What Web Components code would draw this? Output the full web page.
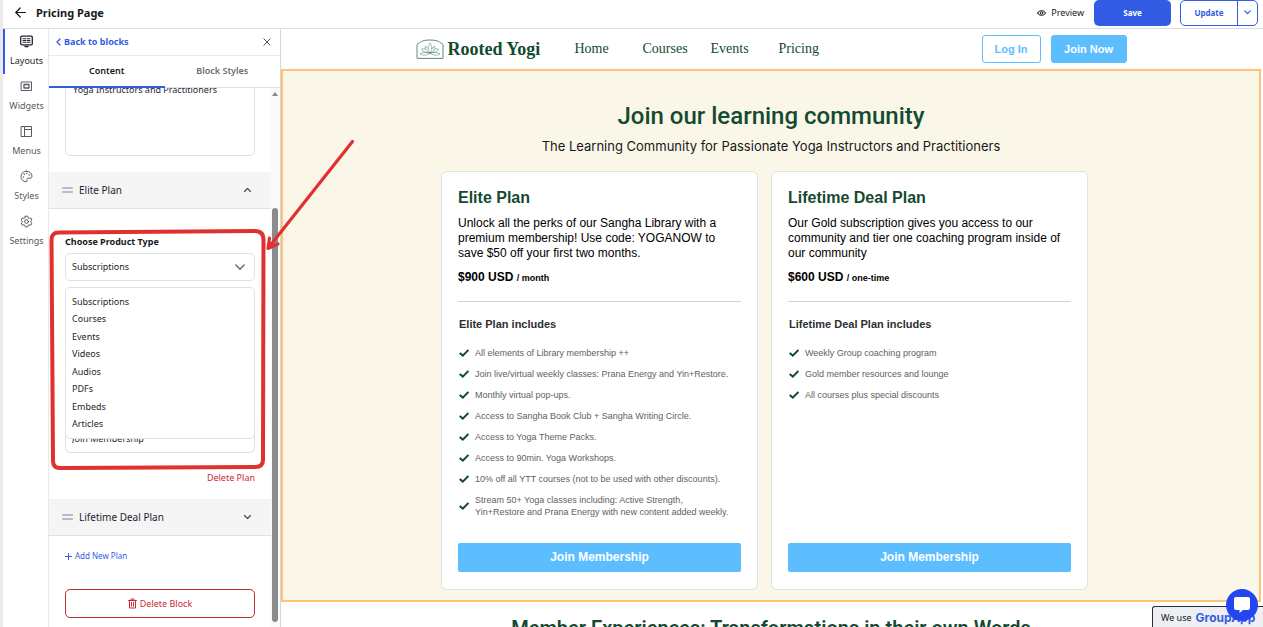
<!DOCTYPE html>
<html lang="en">
<head>
<meta charset="utf-8">
<meta name="viewport" content="width=device-width, initial-scale=1">
<title>Pricing Page</title>
<style>
  html, body { margin: 0; height: 100%; }
  body {
    overflow: hidden; background: #fff; color: #1f2430;
    font: 9px/14px "Noto Sans", "Open Sans", sans-serif;
    --blue: #335ce5; --red: #c92a35; --line: #dcdee3; --green: #144a30; --sky: #5cbeff;
  }
</style>
</head>
<body>
<app-shell>
  <top-bar slot="top" heading="Pricing Page"></top-bar>
  <nav-rail slot="rail">
    <rail-item icon="layouts" active>Layouts</rail-item>
    <rail-item icon="widgets">Widgets</rail-item>
    <rail-item icon="menus">Menus</rail-item>
    <rail-item icon="styles">Styles</rail-item>
    <rail-item icon="settings">Settings</rail-item>
  </nav-rail>
  <block-panel slot="panel"></block-panel>
  <site-preview>
    <site-nav slot="nav"></site-nav>
    <pricing-section>
      <span slot="title">Join our learning community</span>
      <span slot="subtitle">The Learning Community for Passionate Yoga Instructors and Practitioners</span>
      <plan-card name="Elite Plan" price="$900 USD" period="month">
        Unlock all the perks of our Sangha Library with a premium membership! Use code: YOGANOW to save $50 off your first two months.
        <plan-perk slot="perks">All elements of Library membership ++</plan-perk>
        <plan-perk slot="perks">Join live/virtual weekly classes: Prana Energy and Yin+Restore.</plan-perk>
        <plan-perk slot="perks">Monthly virtual pop-ups.</plan-perk>
        <plan-perk slot="perks">Access to Sangha Book Club + Sangha Writing Circle.</plan-perk>
        <plan-perk slot="perks">Access to Yoga Theme Packs.</plan-perk>
        <plan-perk slot="perks">Access to 90min. Yoga Workshops.</plan-perk>
        <plan-perk slot="perks">10% off all YTT courses (not to be used with other discounts).</plan-perk>
        <plan-perk slot="perks">Stream 50+ Yoga classes including: Active Strength,<br>Yin+Restore and Prana Energy with new content added weekly.</plan-perk>
      </plan-card>
      <plan-card name="Lifetime Deal Plan" price="$600 USD" period="one-time">
        Our Gold subscription gives you access to our community and tier one coaching program inside of our community
        <plan-perk slot="perks">Weekly Group coaching program</plan-perk>
        <plan-perk slot="perks">Gold member resources and lounge</plan-perk>
        <plan-perk slot="perks">All courses plus special discounts</plan-perk>
      </plan-card>
    </pricing-section>
    <span slot="next">Member Experiences: Transformations in their own Words</span>
  </site-preview>
  <callout-mark slot="over"></callout-mark>
  <chat-corner slot="over"></chat-corner>
</app-shell>

<script>
const base = `<style>
  :host, *, *::before, *::after { box-sizing: border-box; }
  :host { fill: none; stroke: currentColor; stroke-linecap: round; stroke-linejoin: round; }
  svg { display: block; flex: none; }
  button, input, select, textarea { font: inherit; color: inherit; margin: 0; }
  button { cursor: pointer; background: none; border: 0; padding: 0; }
  a { color: inherit; text-decoration: none; }
  h1, h2, h3, p { margin: 0; font: inherit; }
</style>`;

function define(name, render) {
  customElements.define(name, class extends HTMLElement {
    connectedCallback() {
      if (this.shadowRoot) return;
      const t = document.createElement('template');
      t.innerHTML = base + render(this);
      this.attachShadow({ mode: 'open' }).append(t.content.cloneNode(true));
    }
  });
}

define('app-shell', () => `<style>
  :host { display: grid; grid-template: auto minmax(0, 1fr) / 46px 232px minmax(0, 1fr); height: 100vh;
    position: relative; overflow: hidden; border-left: 3px solid #e9eaed; }
  ::slotted([slot=top]) { grid-column: 1 / -1; }
</style>
<slot name="top"></slot><slot name="rail"></slot><slot name="panel"></slot><slot></slot><slot name="over"></slot>`);

define('top-bar', el => `<style>
  :host { display: flex; align-items: center; height: 29px; padding: 0 5px 3px 12px; border-bottom: 1px solid var(--line); background: #fff; }
  h1 { font-size: 11px; line-height: 16px; font-weight: 700; margin: 0 auto 0 10px; color: #15181e; }
  .preview { display: flex; align-items: center; gap: 5px; margin-right: 10px; font-size: 9px; color: #15181e; }
  .save, .split { height: 26px; border-radius: 5px; font-size: 8px; font-weight: 700; }
  .save { width: 77px; background: var(--blue); color: #fff; margin-right: 9px; }
  .split { display: flex; width: 78px; border: 1px solid var(--blue); color: var(--blue); }
  .split button { flex: 1; }
  .split .more { flex: 0 0 20px; display: grid; place-items: center; border-left: 1px solid var(--blue); }
</style>
<button aria-label="Back"><svg width="11" height="11" viewBox="0 0 11 11" stroke="#15181e" stroke-width="1.2"><path d="M10.5 5.5H.8M5.2 1L.8 5.5L5.2 10"/></svg></button>
<h1>${el.getAttribute('heading')}</h1>
<button class="preview"><svg width="9" height="8" viewBox="0 0 9 8" stroke-width="1"><path d="M.5 4C2 .8 7 .8 8.5 4C7 7.200 2 7.200 .5 4Z"/><circle cx="4.5" cy="4" r="1.300"/></svg>Preview</button>
<button class="save">Save</button>
<div class="split"><button>Update</button><button class="more" aria-label="More update options"><svg width="7" height="5" viewBox="0 0 7 5" stroke-width="1.200"><path d="M.8.8L3.500 3.700L6.200.8"/></svg></button></div>`);

define('nav-rail', () => `<style>
  :host { display: flex; flex-direction: column; border-right: 1px solid #e8e9ed; background: #fff; }
</style><slot></slot>`);

const railIcons = {
  layouts: '<rect x=".7" y="1.200" width="11.600" height="8.600" rx="1" stroke-width="1.300"/><path d="M3 3.800h2.800M3 5.500h2.800M3 7.200h2.800M7.200 3.800H10M7.200 5.500H10M7.200 7.200H10" stroke-width="1.100"/><path d="M5 11.400h3" stroke-width="1.500"/>',
  widgets: '<rect x="1.500" y="2" width="10" height="8.500" stroke-width="1"/><rect x="4" y="4.500" width="5" height="3.500" stroke-width="1.300"/>',
  menus: '<path d="M1.500 1.500h10v10h-10zM4.500 1.500v10M4.500 4.500h7" stroke-width="1"/>',
  styles: '<path d="M6.500 1.200C3.300 1.200 1 3.500 1 6.500s2.500 5.300 5 5.300c1.300 0 1.100-1.200.9-2c-.2-1 .4-1.600 1.300-1.600h1.900c1.300 0 1.900-.8 1.900-2C12 3.300 9.500 1.200 6.500 1.200z" stroke-width="1"/><path d="M3.500 7v.1M4.300 4.300v.1M6.800 3.400v.1M9.300 4.900v.1" stroke-width="1.400"/>',
  settings: '<path d="M5.300 1.200h2.400l.4 1.600l1 .6l1.600-.5l1.200 2.100l-1.200 1.100v1l1.200 1.100l-1.200 2.100l-1.600-.5l-1 .6l-.4 1.500H5.300l-.4-1.500l-1-.6l-1.600.5l-1.200-2.100l1.200-1.100v-1L1.100 5l1.200-2.100l1.600.5l1-.6z" stroke-width="1"/><circle cx="6.500" cy="6.500" r="1.900" stroke-width="1"/>'
};
define('rail-item', el => `<style>
  :host { display: block; height: 45px; border-left: 2px solid transparent; color: #565a63; }
  :host([active]) { border-color: var(--blue); color: #22252c; }
  a { display: flex; flex-direction: column; align-items: center; gap: 6px; padding-top: 6px; }
</style>
<a href="#"><svg width="13" height="13" viewBox="0 0 13 13">${railIcons[el.getAttribute('icon')]}</svg><slot></slot></a>`);

define('plan-row', el => `<style>
  :host { display: flex; align-items: center; height: 37px; padding: 0 19px 0 13px; background: #f5f5f6; border-bottom: 1px solid #e0e1e6; font-size: 10px; }
  .name { flex: 1; padding-left: 6px; }
</style>
<svg width="11" height="6" viewBox="0 0 11 6" stroke="#7c8094"><path d="M.5 1h10M.5 5h10"/></svg>
<span class="name"><slot></slot></span>
<button aria-label="Toggle plan"><svg width="9" height="6" viewBox="0 0 9 6" stroke="#444" stroke-width="1.100"><path d="${el.hasAttribute('open') ? 'M1.500 4.500L4.500 1.500L7.500 4.500' : 'M1.500 1.500L4.500 4.500L7.500 1.500'}"/></svg></button>`);

define('product-select', () => `<style>
  :host { display: block; margin: 26px 16px 0; }
  label { display: block; font-weight: 700; color: #15181e; margin-bottom: 4px; }
  .field { position: relative; }
  select { appearance: none; width: 100%; height: 28px; padding: 0 6px; border: 1px solid #dedfe8; border-radius: 5px; background: #fff; display: block; }
  .field > svg { position: absolute; right: 10px; top: 11px; pointer-events: none; }
  ul { position: absolute; z-index: 1; top: 34px; left: 0; right: 0; height: 152px; margin: 0; padding: 7px 6px; list-style: none;
    display: flex; flex-direction: column; justify-content: space-between; background: #fff; border: 1px solid #dedfe8; border-radius: 5px; }
</style>
<label for="type">Choose Product Type</label>
<div class="field">
  <select id="type"><option>Subscriptions</option></select>
  <svg width="10" height="7" viewBox="0 0 10 7" stroke="#6d7083" stroke-width="1.600"><path d="M1 1L5 5.200L9 1"/></svg>
  <ul role="listbox" aria-label="Product types">
    ${['Subscriptions', 'Courses', 'Events', 'Videos', 'Audios', 'PDFs', 'Embeds', 'Articles'].map(t => `<li role="option">${t}</li>`).join('')}
  </ul>
</div>`);

define('block-panel', () => `<style>
  :host { display: flex; flex-direction: column; min-height: 0; border-right: 1px solid #d5d7dc; background: #fff; }
  header { display: flex; justify-content: space-between; align-items: center; height: 27px; padding: 0 9px 0 7px; border-bottom: 1px solid #e8e9ed; flex: none; }
  .back { display: flex; align-items: center; gap: 3px; font-weight: 700; color: var(--blue); }
  .tabs { display: grid; grid-template-columns: 1fr 1fr; height: 32px; flex: none; border-bottom: 1px solid var(--line); font-weight: 600; color: #6a6d75; }
  .tabs button { border-bottom: 2px solid transparent; margin-bottom: -1px; }
  .tabs button[aria-selected=true] { border-color: var(--blue); color: #15181e; }
  .body { flex: 1; min-height: 0; display: flex; overflow: hidden; }
  .content { flex: 1; min-width: 0; }
  textarea, .text { display: block; width: calc(100% - 32px); border: 1px solid #dedfe8; border-radius: 5px; background: #fff; resize: none; overflow: hidden; }
  textarea { height: 74px; margin: -6px 16px 16px; padding: 1px 7px; line-height: 12px; }
  .text { height: 29px; margin: 143px 16px 0; padding: 0 6px; }
  .delete-plan { display: block; margin: 18px 16px 14px auto; line-height: 14px; color: var(--red); }
  .add { display: flex; align-items: center; gap: 3px; margin: 13px 16px 26px; line-height: 14px; color: var(--blue); font-size: 8px; }
  .delete { display: flex; align-items: center; justify-content: center; gap: 3px; width: calc(100% - 32px); height: 29px; margin: 0 16px;
    border: 1px solid var(--red); border-radius: 5px; color: var(--red); }
  .bar { width: 9px; display: flex; flex-direction: column; align-items: flex-start; padding: 4px 0 5px 1px; background: #fafafa; }
  .up { border: 3px solid transparent; border-top: 0; border-bottom: 4px solid #85878c; }
  .thumb { flex: 1; width: 6px; margin-top: 112px; border-radius: 3px; background: #8b8b8b; }
</style>
<header>
  <a class="back" href="#"><svg width="5" height="8" viewBox="0 0 5 8" stroke-width="1.300"><path d="M4 1L1 4L4 7"/></svg>Back to blocks</a>
  <button aria-label="Close"><svg width="8" height="8" viewBox="0 0 8 8" stroke="#555860"><path d="M.8.8l6.400 6.400M7.200.8L.8 7.200"/></svg></button>
</header>
<div class="tabs" role="tablist"><button role="tab" aria-selected="true">Content</button><button role="tab" aria-selected="false">Block Styles</button></div>
<div class="body">
  <div class="content">
    <textarea aria-label="Subtitle">Yoga Instructors and Practitioners</textarea>
    <plan-row open>Elite Plan</plan-row>
    <product-select></product-select>
    <input class="text" aria-label="Button text" value="Join Membership">
    <button class="delete-plan">Delete Plan</button>
    <plan-row>Lifetime Deal Plan</plan-row>
    <button class="add"><svg width="7" height="7" viewBox="0 0 7 7"><path d="M3.500.5v6M.5 3.500h6"/></svg>Add New Plan</button>
    <button class="delete"><svg width="9" height="11" viewBox="0 0 9 11"><path d="M.5 2.500h8M3 2.500V1h3v1.500M1.500 2.500V10h6V2.500M3.500 4.500v3.700M5.500 4.500v3.700"/></svg>Delete Block</button>
  </div>
  <div class="bar"><span class="up"></span><span class="thumb"></span></div>
</div>`);

define('site-preview', () => `<style>
  :host { display: flex; flex-direction: column; min-height: 0; overflow: hidden; padding-right: 2px; background: #fff; }
  h2 { padding-top: 12px; flex: none; text-align: center; font: 600 20px/28px Roboto, sans-serif; color: var(--green); }
</style><slot name="nav"></slot><slot></slot><h2><slot name="next"></slot></h2>`);

define('site-nav', () => `<style>
  :host { display: flex; justify-content: center; height: 40px; flex: none; }
  .row { display: flex; align-items: center; width: 100%; max-width: 711px; color: var(--green); }
  .brand { display: flex; align-items: center; gap: 4px; width: 159px; font: 700 18px/22px "Liberation Serif", serif; }
  nav { display: grid; grid-template-columns: repeat(4, 68px); margin-right: auto; font: 14px/18px "Liberation Serif", serif; }
  button { height: 28px; border: 1px solid var(--sky); border-radius: 3px; font: 700 11px/14px "Liberation Sans", sans-serif; color: var(--sky); width: 59px; background: #fff; }
  .join { width: 76px; margin-left: 10px; background: var(--sky); color: #fff; }
</style>
<div class="row">
  <a class="brand" href="#"><svg width="28" height="20" viewBox="0 0 28 20" stroke="#5f8d77" stroke-width="1"><path d="M1 19V5.500C4 3.500 5.500 1 14 1s10 2.500 13 4.500V19z"/><path d="M14 4.500c-2.600 3-2.600 7 0 9.500c2.600-2.500 2.600-6.500 0-9.500zM14 14c-3-.5-5-3-5-6.500c1.500.3 2.600 1 3.200 2M14 14c3-.5 5-3 5-6.500c-1.500.3-2.600 1-3.200 2M14 14c-4 .2-7-1-8.500-4c1.300-.4 2.500-.4 3.700.1M14 14c4 .2 7-1 8.500-4c-1.300-.4-2.500-.4-3.700.1M14 14c-3-1-7-1-10 .8C7 17 11 16.500 14 14c3 2.500 7 3 10 .8c-3-1.800-7-1.800-10-.8" stroke-width=".6"/></svg>Rooted Yogi</a>
  <nav><a href="#">Home</a><a href="#">Courses</a><a href="#">Events</a><a href="#">Pricing</a></nav>
  <button>Log In</button><button class="join">Join Now</button>
</div>`);

define('pricing-section', () => `<style>
  :host { display: block; flex: none; padding: 31px 0 10px; border: 2px solid #ffc27a; background: #fbf7e8; text-align: center; }
  h2 { font: 500 24px/28px Roboto, sans-serif; color: var(--green); }
  p { margin-top: 7px; font: 13px/18px Inter, sans-serif; color: #15171a; }
  .plans { display: grid; grid-template-columns: 1fr 1fr; max-width: 660px; margin: 16px auto 0; text-align: left; }
</style>
<h2><slot name="title"></slot></h2><p><slot name="subtitle"></slot></p>
<div class="plans"><slot></slot></div>`);

define('plan-card', el => `<style>
  :host { display: flex; flex-direction: column; margin-right: 13px; padding: 17px 16px; border: 1px solid #dfe1e4; border-radius: 6px; background: #fff;
    font: 12px/15px "Liberation Sans", Arial, sans-serif; color: #000; }
  h3 { font-size: 16px; line-height: 18px; font-weight: 700; color: var(--green); margin-bottom: 9px; }
  .price { font-weight: 700; line-height: 14px; margin: 9px 0 16px; }
  .price small { font-size: 9px; }
  .includes { margin: 0; padding: 15px 0 16px 1px; border-top: 1px solid #cfd5d2; font-size: 11px; line-height: 14px; color: #2c2f33; }
  .perks { display: flex; flex-direction: column; gap: 9px; padding-left: 1px; margin-bottom: 25px; }
  button { margin-top: auto; height: 29px; border-radius: 2px; background: var(--sky); color: #fff; font-weight: 700; }
</style>
<h3>${el.getAttribute('name')}</h3>
<p><slot></slot></p>
<p class="price">${el.getAttribute('price')} <small>/ ${el.getAttribute('period')}</small></p>
<h3 class="includes">${el.getAttribute('name')} includes</h3>
<div class="perks" role="list"><slot name="perks"></slot></div>
<button>Join Membership</button>`);

define('plan-perk', () => `<style>
  :host { display: flex; align-items: center; gap: 6px; font-size: 9px; line-height: 12px; color: #5d6166; }
</style>
<svg width="10" height="8" viewBox="0 0 10 8" stroke="#144a30" stroke-width="2" stroke-linecap="butt" stroke-linejoin="miter"><path d="M.7 3.900L3.800 6.600L9.400 1"/></svg><span><slot></slot></span>`);

define('callout-mark', () => `<style>
  :host { position: absolute; left: 46px; top: 136px; pointer-events: none; z-index: 2; color: #e03131; }
</style>
<svg width="310" height="336" viewBox="49 136 310 336"><path d="M59 232.500L255 231Q263.500 231 263.500 240L263 460Q263 467 255 467L60 468Q53 468 53 461L51.500 240Q51.500 232.500 59 232.500Z" stroke-width="4"/><path d="M352.500 141.500L269 247M269.500 238L268 248.500L278 244" stroke-width="3.200"/></svg>`);

define('chat-corner', () => `<style>
  :host { position: absolute; right: 0; bottom: 0; z-index: 3; }
  .badge { display: flex; align-items: center; gap: 4px; width: 111px; height: 21px; padding: 2px 0 0 8px; border: 1px solid #2b2d31; border-right: 0; border-bottom: 0;
    border-radius: 3px 0 0 0; background: #eeeff3; color: #15181e; }
  b { font: 700 12px/16px Inter, sans-serif; color: var(--blue); }
  button { position: absolute; right: 5px; bottom: 6px; width: 32px; height: 32px; border-radius: 50%; background: #2446ef; display: grid; place-items: center; }
</style>
<a class="badge" href="#">We use <b>GroupApp</b></a>
<button aria-label="Open chat"><svg width="16" height="16" viewBox="0 0 16 16" stroke="none"><path fill="#fff" d="M2 0h12q2 0 2 2v9q0 2-2 2H9l-3.500 3V13H2q-2 0-2-2V2q0-2 2-2z"/></svg></button>`);
</script>
</body>
</html>
